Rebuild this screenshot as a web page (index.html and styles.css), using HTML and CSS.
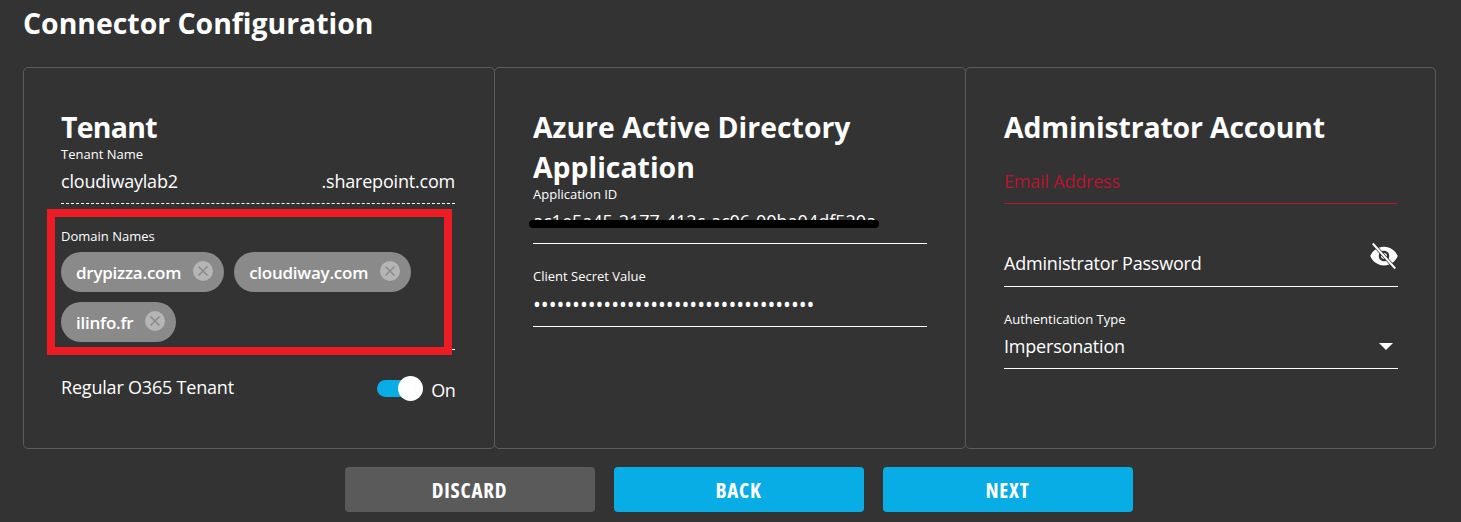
FILE: index.html
```html
<!DOCTYPE html>
<html lang="en">
<head>
<meta charset="utf-8">
<title>Connector Configuration</title>
<link rel="stylesheet" href="styles.css">
</head>
<body>
<h1 class="page-title">Connector Configuration</h1>
<div class="cards">
  <section class="card card-tenant">
    <h2 class="card-title">Tenant</h2>
    <div class="field field-dotted">
      <div class="label">Tenant Name</div>
      <div class="value value-row"><span>cloudiwaylab2</span><span>.sharepoint.com</span></div>
    </div>
    <div class="field-chips">
      <div class="label">Domain Names</div>
      <div class="chips">
        <span class="chip">drypizza.com<span class="chip-x"><svg viewBox="0 0 20 20" width="20" height="20"><path d="M5.5 5.5l9 9M14.5 5.5l-9 9" class="x-stroke"/></svg></span></span>
        <span class="chip">cloudiway.com<span class="chip-x"><svg viewBox="0 0 20 20" width="20" height="20"><path d="M5.5 5.5l9 9M14.5 5.5l-9 9" class="x-stroke"/></svg></span></span>
        <span class="chip">ilinfo.fr<span class="chip-x"><svg viewBox="0 0 20 20" width="20" height="20"><path d="M5.5 5.5l9 9M14.5 5.5l-9 9" class="x-stroke"/></svg></span></span>
      </div>
    </div>
    <div class="toggle-row">
      <span class="value-text">Regular O365 Tenant</span>
      <span class="toggle-wrap">
        <span class="toggle"><span class="toggle-thumb"></span></span>
        <span class="toggle-state">On</span>
      </span>
    </div>
    <div class="annotation"></div>
  </section>

  <section class="card">
    <h2 class="card-title">Azure Active Directory Application</h2>
    <div class="field">
      <div class="label">Application ID</div>
      <div class="redacted"><div class="value value-id">ac1e5a45-2177-412c-ac06-00ba04df520a</div></div>
      <div class="scribble"></div>
    </div>
    <div class="field">
      <div class="label">Client Secret Value</div>
      <div class="value dots">••••••••••••••••••••••••••••••••••••</div>
    </div>
  </section>

  <section class="card card-last">
    <h2 class="card-title">Administrator Account</h2>
    <div class="field field-bare field-error">
      <div class="value">Email Address</div>
    </div>
    <div class="field field-bare">
      <div class="value value-row"><span>Administrator Password</span>
        <svg class="eye" viewBox="0 0 24 24" width="30" height="30">
          <path fill="#fff" fill-rule="evenodd" d="M12 4.5C7 4.5 2.73 7.61 1 12c1.73 4.39 6 7.5 11 7.5s9.27-3.11 11-7.5c-1.73-4.39-6-7.5-11-7.5zM12 16.2c-2.32 0-4.2-1.88-4.2-4.2s1.88-4.2 4.2-4.2 4.2 1.88 4.2 4.2-1.88 4.2-4.2 4.2zM12 9.6c-1.33 0-2.4 1.07-2.4 2.4s1.07 2.4 2.4 2.4 2.4-1.07 2.4-2.4-1.07-2.4-2.4-2.4z"/>
          <path d="M3.5 2.5l17 19" stroke="#333" stroke-width="2.8" fill="none"/>
          <path d="M3 2l18 20" stroke="#fff" stroke-width="1.6" fill="none"/>
        </svg>
      </div>
    </div>
    <div class="field">
      <div class="label">Authentication Type</div>
      <div class="value value-row"><span>Impersonation</span><span class="caret"></span></div>
    </div>
  </section>
</div>
<div class="actions">
  <button class="btn btn-muted" type="button">DISCARD</button>
  <button class="btn btn-primary" type="button">BACK</button>
  <button class="btn btn-primary" type="button">NEXT</button>
</div>
</body>
</html>
```
FILE: styles.css
```css
* { box-sizing: border-box; }
html, body { margin: 0; height: 100%; }
body {
  background: #333333;
  color: #fff;
  font-family: "Open Sans", "Noto Sans", sans-serif;
  padding: 0 25px 0 23px;
  overflow: hidden;
}
.page-title {
  margin: 0;
  height: 67px;
  padding-top: 3px;
  font-size: 28.4px;
  line-height: 40px;
  font-weight: 700;
}
.cards {
  display: grid;
  grid-template-columns: repeat(3, 471px);
  height: 382px;
}
.card {
  position: relative;
  border: 1px solid #5c5c5c;
  border-radius: 5px;
  padding: 39px 38px 0 38px;
  margin-right: -1px;
}
.card-tenant { padding: 39px 39px 0 37px; }
.card-last { margin-right: 0; padding-right: 37px; }
.card-title {
  margin: 0;
  font-size: 28.4px;
  line-height: 40px;
  font-weight: 700;
}
.card-tenant .card-title { letter-spacing: -0.7px; }
.card-last .card-title { letter-spacing: -0.15px; }
.field {
  position: relative;
  height: 57.4px;
  margin-bottom: 25px;
  border-bottom: 1px solid #fff;
}
.field-bare { padding-top: 21px; }
.field-dotted { border-bottom: 1px dashed #fff; }
.field-error { border-bottom-color: #b8142f; color: #b8142f; }
.label {
  font-size: 13px;
  line-height: 14px;
}
.value {
  margin-top: 7px;
  font-size: 18px;
  line-height: 26px;
  letter-spacing: -0.2px;
}
.field-bare .value { margin-top: 0; }
.value-row {
  display: flex;
  justify-content: space-between;
  align-items: center;
}
.redacted {
  height: 12px;
  margin-top: 7px;
  overflow: hidden;
}
.redacted .value-id { margin-top: 0; letter-spacing: 0; }
.scribble {
  position: absolute;
  left: -4px;
  top: 33px;
  width: 350px;
  height: 8px;
  border-radius: 4px;
  background: #000;
}
.value.dots { font-size: 21px; line-height: 28px; letter-spacing: -0.08px; }
.eye { margin: -15px -1px 0 0; }
.caret {
  width: 0;
  height: 0;
  margin: 2px 5px 0 0;
  border-left: 7px solid transparent;
  border-right: 7px solid transparent;
  border-top: 7px solid #fff;
}
.field-chips {
  padding-bottom: 7px;
  border-bottom: 1px solid #fff;
}
.chips {
  display: flex;
  flex-wrap: wrap;
  gap: 10px;
  margin-top: 9px;
}
.chip {
  display: inline-flex;
  align-items: center;
  height: 40px;
  padding: 0 11px 0 15px;
  border-radius: 20px;
  background: #8a8a8a;
  font-size: 17px;
  font-weight: 600;
  letter-spacing: -0.25px;
}
.chip-x {
  display: block;
  width: 20px;
  height: 20px;
  margin: -2px 0 0 12px;
  border-radius: 50%;
  background: #b5b5b5;
}
.chip-x svg { display: block; }
.x-stroke { stroke: #8a8a8a; stroke-width: 1.5; fill: none; }
.toggle-row {
  display: flex;
  justify-content: space-between;
  align-items: center;
  height: 26px;
  margin-top: 25px;
}
.value-text { font-size: 18px; letter-spacing: -0.2px; margin-bottom: 2px; }
.toggle-wrap { display: flex; align-items: center; }
.toggle {
  position: relative;
  display: block;
  width: 37px;
  height: 17px;
  border-radius: 9px;
  background: #08ade6;
}
.toggle-thumb {
  position: absolute;
  left: 21px;
  top: -4px;
  width: 25px;
  height: 25px;
  border-radius: 50%;
  background: #fff;
}
.toggle-state {
  margin: 3px 0 0 17px;
  font-size: 18px;
  letter-spacing: -0.7px;
}
.annotation {
  position: absolute;
  left: 23px;
  top: 141px;
  width: 405px;
  height: 146px;
  border: 8px solid #ed1c24;
}
.actions {
  display: flex;
  justify-content: center;
  gap: 19px;
  margin-top: 18px;
  padding-left: 18px;
}
.btn {
  width: 250px;
  height: 45px;
  border: 0;
  border-radius: 4px;
  color: #fff;
  font-family: inherit;
  font-size: 21px;
  font-stretch: 75%;
  font-weight: 700;
  letter-spacing: 0.75px;
}
.btn-muted { background: #5a5a5a; }
.btn-primary { background: #08ade6; }
```
